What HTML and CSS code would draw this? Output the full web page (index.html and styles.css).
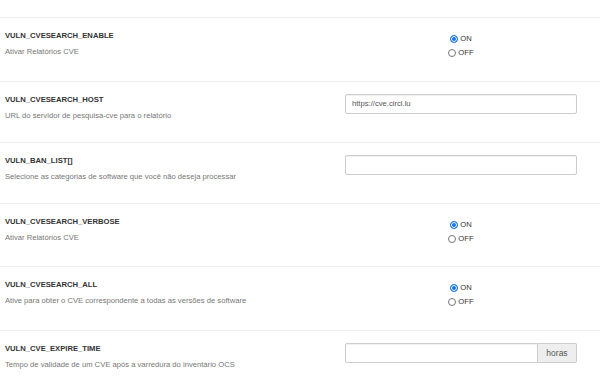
FILE: index.html
```html
<!DOCTYPE html>
<html>
<head>
<meta charset="utf-8">
<link rel="stylesheet" href="styles.css">
</head>
<body>
<div class="page">
  <div class="spacer"></div>

  <div class="row">
    <div class="info">
      <div class="title">VULN_CVESEARCH_ENABLE</div>
      <div class="desc">Ativar Relatórios CVE</div>
    </div>
    <div class="control">
      <div class="radios">
        <label class="radio"><span class="dot checked"></span>ON</label>
        <label class="radio"><span class="dot"></span>OFF</label>
      </div>
    </div>
  </div>

  <div class="row">
    <div class="info">
      <div class="title">VULN_CVESEARCH_HOST</div>
      <div class="desc">URL do servidor de pesquisa-cve para o relatório</div>
    </div>
    <div class="control">
      <div class="input">https://cve.circl.lu</div>
    </div>
  </div>

  <div class="row">
    <div class="info">
      <div class="title">VULN_BAN_LIST[]</div>
      <div class="desc">Selecione as categorias de software que você não deseja processar</div>
    </div>
    <div class="control">
      <div class="input"></div>
    </div>
  </div>

  <div class="row">
    <div class="info">
      <div class="title">VULN_CVESEARCH_VERBOSE</div>
      <div class="desc">Ativar Relatórios CVE</div>
    </div>
    <div class="control">
      <div class="radios">
        <label class="radio"><span class="dot checked"></span>ON</label>
        <label class="radio"><span class="dot"></span>OFF</label>
      </div>
    </div>
  </div>

  <div class="row">
    <div class="info">
      <div class="title">VULN_CVESEARCH_ALL</div>
      <div class="desc">Ative para obter o CVE correspondente a todas as versões de software</div>
    </div>
    <div class="control">
      <div class="radios">
        <label class="radio"><span class="dot checked"></span>ON</label>
        <label class="radio"><span class="dot"></span>OFF</label>
      </div>
    </div>
  </div>

  <div class="row">
    <div class="info">
      <div class="title">VULN_CVE_EXPIRE_TIME</div>
      <div class="desc">Tempo de validade de um CVE após a varredura do inventário OCS</div>
    </div>
    <div class="control">
      <div class="group">
        <div class="input grow"></div>
        <div class="addon">horas</div>
      </div>
    </div>
  </div>
</div>
</body>
</html>
```

FILE: styles.css
```css
html, body {
  margin: 0;
  padding: 0;
  background: #fff;
}

body {
  font-family: "Liberation Sans", Arial, sans-serif;
  font-size: 7.65px;
  color: #333;
}

.page {
  width: 600px;
}

.spacer {
  height: 17px;
}

.row {
  display: flex;
  align-items: flex-start;
  border-top: 1px solid #eeeeee;
  padding: 10px 23px 19px 5px;
}

.info {
  flex: 1;
}

.title {
  font-weight: bold;
  line-height: 14px;
  color: #333;
  padding-top: 1px;
}

.desc {
  margin-top: 2px;
  line-height: 14px;
  color: #777;
}

.control {
  width: 232px;
  padding-top: 2px;
}

.radios {
  padding: 2px 0 1.5px;
  display: flex;
  flex-direction: column;
  align-items: center;
}

.radio {
  display: flex;
  align-items: center;
  height: 14px;
  line-height: 14px;
  color: #333;
}

.dot {
  box-sizing: border-box;
  width: 8px;
  height: 8px;
  border-radius: 50%;
  border: 1px solid #767676;
  background: #fff;
  margin-right: 2px;
}

.dot.checked {
  border-color: #1a73e8;
  background: #1a73e8;
  box-shadow: inset 0 0 0 1px #fff;
}

.input {
  box-sizing: border-box;
  height: 20px;
  border: 1px solid #cccccc;
  border-radius: 2px;
  box-shadow: inset 0 1px 1px rgba(0, 0, 0, 0.06);
  padding: 0 6px;
  line-height: 18px;
  color: #555;
  font-size: 7.65px;
  background: #fff;
}

.group {
  display: flex;
}

.grow {
  flex: 1;
  border-radius: 2px 0 0 2px;
}

.addon {
  box-sizing: border-box;
  width: 39px;
  height: 20px;
  border: 1px solid #cccccc;
  border-left: none;
  border-radius: 0 2px 2px 0;
  background: #eeeeee;
  color: #555;
  font-size: 8.5px;
  line-height: 18px;
  text-align: center;
}
```
